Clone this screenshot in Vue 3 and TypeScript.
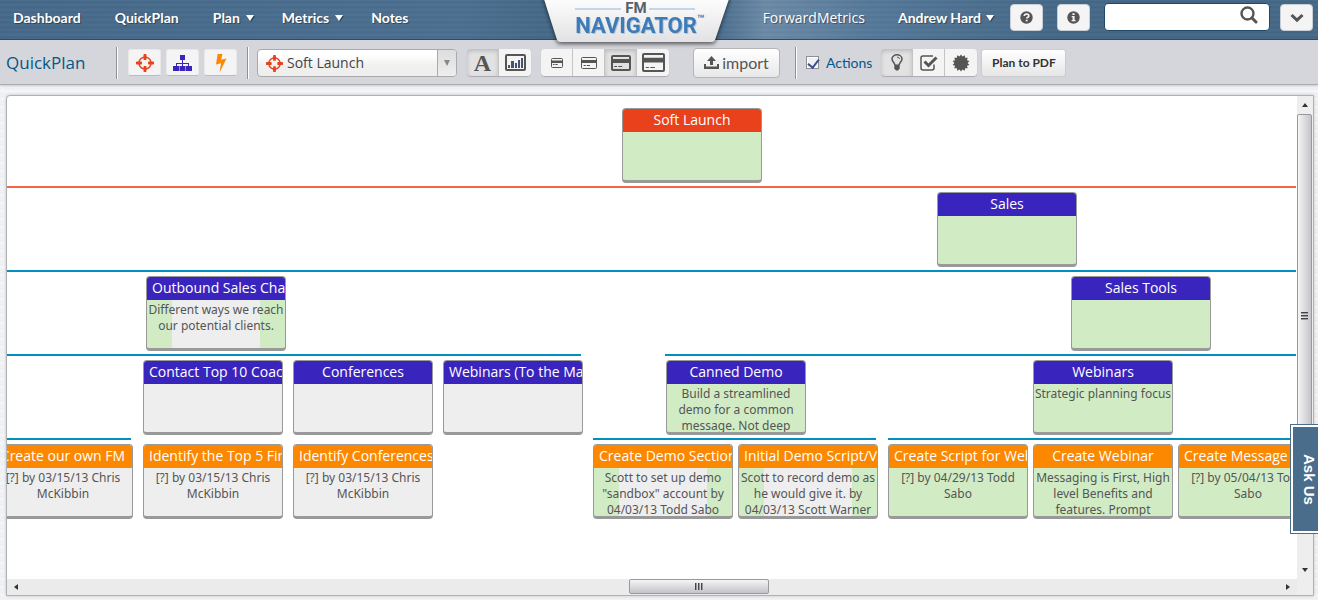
<script setup lang="ts">
import { ref } from 'vue'

type Kind = 'launch' | 'goal' | 'action'
type Fill = 'green' | 'gray' | 'partial'

interface PlanNode {
  x: number
  level: number
  kind: Kind
  fill: Fill
  title: string
  note?: string
}

interface Rail {
  level: number
  from: number
  to?: number
  kind: 'root' | 'branch'
}

const levelHeight = 84

const nodes: PlanNode[] = [
  { x: 615, level: 0, kind: 'launch', fill: 'green', title: 'Soft Launch' },
  { x: 930, level: 1, kind: 'goal', fill: 'green', title: 'Sales' },
  { x: 139, level: 2, kind: 'goal', fill: 'partial', title: 'Outbound Sales Channels', note: 'Different ways we reach our potential clients.' },
  { x: 1064, level: 2, kind: 'goal', fill: 'green', title: 'Sales Tools' },
  { x: 136, level: 3, kind: 'goal', fill: 'gray', title: 'Contact Top 10 Coaches' },
  { x: 286, level: 3, kind: 'goal', fill: 'gray', title: 'Conferences' },
  { x: 436, level: 3, kind: 'goal', fill: 'gray', title: 'Webinars (To the Market)' },
  { x: 659, level: 3, kind: 'goal', fill: 'green', title: 'Canned Demo', note: 'Build a streamlined demo for a common message. Not deep' },
  { x: 1026, level: 3, kind: 'goal', fill: 'green', title: 'Webinars', note: 'Strategic planning focus' },
  { x: -14, level: 4, kind: 'action', fill: 'gray', title: 'Create our own FM', note: '[?] by 03/15/13 Chris McKibbin' },
  { x: 136, level: 4, kind: 'action', fill: 'gray', title: 'Identify the Top 5 Firms', note: '[?] by 03/15/13 Chris McKibbin' },
  { x: 286, level: 4, kind: 'action', fill: 'gray', title: 'Identify Conferences', note: '[?] by 03/15/13 Chris McKibbin' },
  { x: 586, level: 4, kind: 'action', fill: 'partial', title: 'Create Demo Section', note: 'Scott to set up demo "sandbox" account by 04/03/13 Todd Sabo' },
  { x: 731, level: 4, kind: 'action', fill: 'partial', title: 'Initial Demo Script/Video', note: 'Scott to record demo as he would give it. by 04/03/13 Scott Warner' },
  { x: 881, level: 4, kind: 'action', fill: 'green', title: 'Create Script for Webinar', note: '[?] by 04/29/13 Todd Sabo' },
  { x: 1026, level: 4, kind: 'action', fill: 'green', title: 'Create Webinar', note: 'Messaging is First, High level Benefits and features. Prompt' },
  { x: 1171, level: 4, kind: 'action', fill: 'green', title: 'Create Message Script', note: '[?] by 05/04/13 Todd Sabo' },
]

const rails: Rail[] = [
  { level: 1, from: 0, kind: 'root' },
  { level: 2, from: 0, kind: 'branch' },
  { level: 3, from: 0, to: 574, kind: 'branch' },
  { level: 3, from: 658, kind: 'branch' },
  { level: 4, from: 0, to: 124, kind: 'branch' },
  { level: 4, from: 586, to: 869, kind: 'branch' },
  { level: 4, from: 881, kind: 'branch' },
]

const nodeStyle = (n: PlanNode) => ({ left: `${n.x}px`, top: `${12 + n.level * levelHeight}px` })

const railStyle = (r: Rail) => ({
  left: `${r.from}px`,
  top: `${6 + r.level * levelHeight}px`,
  ...(r.to === undefined ? { right: '1px' } : { width: `${r.to - r.from}px` }),
})

const cardSizes = [
  { label: 'Tiny cards', width: 12, height: 10, stroke: 1 },
  { label: 'Small cards', width: 16, height: 12, stroke: 1 },
  { label: 'Medium cards', width: 20, height: 16, stroke: 2 },
  { label: 'Large cards', width: 23, height: 19, stroke: 2 },
]
const cardSize = ref(2)
const showActions = ref(true)
const query = ref('')
const plan = ref('Soft Launch')

const burst = Array.from({ length: 28 }, (_, i) => {
  const r = i % 2 ? 6.6 : 8.6
  const a = (i * Math.PI) / 14
  return `${(9 + r * Math.sin(a)).toFixed(2)},${(9 - r * Math.cos(a)).toFixed(2)}`
}).join(' ')

const crosshair =
  'M1325 1024h-109q-26 0-45-19t-19-45v-128q0-26 19-45t45-19h109q-32-108-112.5-188.5t-188.5-112.5v109q0 26-19 45t-45 19h-128q-26 0-45-19t-19-45v-109q-108 32-188.5 112.5t-112.5 188.5h109q26 0 45 19t19 45v128q0 26-19 45t-45 19h-109q32 108 112.5 188.5t188.5 112.5v-109q0-26 19-45t45-19h128q26 0 45 19t19 45v109q108-32 188.5-112.5t112.5-188.5zM1664 832v128q0 26-19 45t-45 19h-143q-37 161-154.5 278.5t-278.5 154.5v143q0 26-19 45t-45 19h-128q-26 0-45-19t-19-45v-143q-161-37-278.5-154.5t-154.5-278.5h-143q-26 0-45-19t-19-45v-128q0-26 19-45t45-19h143q37-161 154.5-278.5t278.5-154.5v-143q0-26 19-45t45-19h128q26 0 45 19t19 45v143q161 37 278.5 154.5t154.5 278.5h143q26 0 45 19t19 45z'
</script>

<template>
  <div class="app">
    <header class="topbar">
      <nav class="nav">
        <a href="#dashboard">Dashboard</a>
        <a href="#quickplan">QuickPlan</a>
        <a href="#plan" class="has-menu">Plan<i class="caret"></i></a>
        <a href="#metrics" class="has-menu">Metrics<i class="caret"></i></a>
        <a href="#notes">Notes</a>
      </nav>
      <a class="logo" href="#home" aria-label="FM Navigator home">
        <svg width="194" height="50" viewBox="0 0 194 50">
          <defs>
            <linearGradient id="plate" x1="0" y1="0" x2="0" y2="1">
              <stop offset="0" stop-color="#ffffff" />
              <stop offset="1" stop-color="#e2e2e4" />
            </linearGradient>
          </defs>
          <path class="plate" d="M4 -4 L18 40 Q19 42 21 42 H173 Q175 42 176 40 L191 -4 Z" fill="url(#plate)" />
          <path d="M36 9 H82 M110 9 H156" stroke="#8fb4dc" stroke-width="1" />
          <text class="logo-small" x="97" y="13" text-anchor="middle">FM</text>
          <text class="logo-big" x="97" y="33" text-anchor="middle">NAVIGATOR</text>
          <text class="logo-tm" x="158" y="23">™</text>
        </svg>
      </a>
      <div class="account">
        <span class="company">ForwardMetrics</span>
        <a href="#account" class="user has-menu">Andrew Hard<i class="caret"></i></a>
        <button class="square" type="button" aria-label="Help">
          <svg width="13" height="13" viewBox="0 0 13 13">
            <circle cx="6.5" cy="6.5" r="6.2" fill="#555" />
            <path d="M4.3 5 Q4.5 3 6.6 3 Q8.8 3.1 8.8 4.9 Q8.7 6 7.5 6.5 Q6.7 6.9 6.7 7.6" fill="none" stroke="#f4f4f4" stroke-width="1.7" />
            <rect x="5.8" y="8.7" width="1.8" height="1.7" fill="#f4f4f4" />
          </svg>
        </button>
        <button class="square" type="button" aria-label="Information">
          <svg width="13" height="13" viewBox="0 0 13 13">
            <circle cx="6.5" cy="6.5" r="6.2" fill="#555" />
            <path d="M5.4 2.3 h2.2 v1.7 h-2.2z M4.7 5 h2.9 v4 h1 v1.3 h-4 v-1.3 h1 v-2.7 h-.9z" fill="#f4f4f4" />
          </svg>
        </button>
        <label class="search">
          <input v-model="query" type="text" aria-label="Search" />
          <svg width="18" height="18" viewBox="0 0 18 18" fill="none" stroke="#555">
            <circle cx="7.5" cy="7.5" r="6" stroke-width="2.4" />
            <path d="M12 12 L16 16" stroke-width="3" stroke-linecap="round" />
          </svg>
        </label>
        <button class="square last" type="button" aria-label="More">
          <svg width="14" height="10" viewBox="0 0 14 10" fill="none" stroke="#555" stroke-width="3">
            <path d="M1.5 2 L7 7.2 L12.5 2" />
          </svg>
        </button>
      </div>
    </header>

    <div class="toolbar">
      <h1>QuickPlan</h1>
      <span class="divider"></span>
      <div class="tools">
        <button class="tool" type="button" aria-label="Add target">
          <svg width="18" height="18" viewBox="128 128 1536 1536" fill="#e8421c"><path :d="crosshair" /></svg>
        </button>
        <button class="tool" type="button" aria-label="Add goal">
          <svg width="19" height="16" viewBox="0 0 19 16" fill="#3a24be">
            <path d="M7 0h5v5h-5z M0 11h6v5h-6z M6.5 11h6v5h-6z M13 11h6v5h-6z M9 5h1v3h6v3h-1v-2h-5v2h-1v-2h-5v2h-1v-3h6z" />
          </svg>
        </button>
        <button class="tool" type="button" aria-label="Add action">
          <svg width="12" height="20" viewBox="0 0 12 20" fill="#fb8800">
            <path d="M2.6 1 H7.5 L6 6.8 L11.5 5.5 L4.6 19.5 L6 10.3 L1 11.5 Z" />
          </svg>
        </button>
      </div>
      <span class="divider near"></span>
      <label class="picker">
        <svg class="picker-icon" width="17" height="17" viewBox="128 128 1536 1536" fill="#e8421c"><path :d="crosshair" /></svg>
        <select v-model="plan" aria-label="Plan">
          <option>Soft Launch</option>
        </select>
        <span class="picker-arrow"><i></i></span>
      </label>
      <div class="group views">
        <button class="active letter" type="button" aria-label="Text view">A</button>
        <button type="button" aria-label="Chart view">
          <svg width="21" height="17" viewBox="0 0 21 17">
            <rect x="1" y="1" width="19" height="15" rx="1" fill="none" stroke="#555" stroke-width="2" />
            <path d="M3 11h2v3h-2z M6 7h3v7h-3z M10 9h2v5h-2z M13 6h2v8h-2z M16 4h2v10h-2z" fill="#46536f" />
          </svg>
        </button>
      </div>
      <div class="group sizes">
        <button
          v-for="(size, i) in cardSizes"
          :key="size.label"
          type="button"
          :class="{ active: cardSize === i }"
          :aria-label="size.label"
          @click="cardSize = i"
        >
          <svg :width="size.width" :height="size.height" fill="#555">
            <rect
              :x="size.stroke / 2"
              :y="size.stroke / 2"
              :width="size.width - size.stroke"
              :height="size.height - size.stroke"
              rx="1"
              fill="none"
              stroke="#555"
              :stroke-width="size.stroke"
            />
            <rect x="0" y="25%" width="100%" height="25%" />
            <rect x="16%" :y="size.height - size.stroke - 3" width="14%" height="1" />
            <rect x="36%" :y="size.height - size.stroke - 3" width="20%" height="1" />
          </svg>
        </button>
      </div>
      <button class="import" type="button">
        <svg width="15" height="13" viewBox="0 0 15 13" fill="#555">
          <path d="M7.5 0 L12 5 H9 V9 H6 V5 H3 Z M0 8 H2 V10.5 H13 V8 H15 V13 H0 Z" />
        </svg>
        import
      </button>
      <span class="divider"></span>
      <label class="actions">
        <input v-model="showActions" type="checkbox" />
        Actions
      </label>
      <div class="group">
        <button class="active" type="button" aria-label="Ideas">
          <svg width="12" height="17" viewBox="0 0 12 17" fill="none" stroke="#555">
            <path d="M3.8 11 C3.8 8.5 1 8 1 5 C1 2.5 3.3 .8 6 .8 C8.7 .8 11 2.5 11 5 C11 8 8.2 8.5 8.2 11" stroke-width="1.5" />
            <path d="M6 3 Q8.5 3.2 8.5 5" stroke-width=".9" />
            <path d="M3.3 10.5h5.4v4l-1.7 2h-2l-1.7-2z" fill="#555" stroke="none" />
          </svg>
        </button>
        <button type="button" aria-label="Tasks">
          <svg width="18" height="16" viewBox="0 0 18 16" fill="none" stroke="#555">
            <path d="M14 9.5 V13 Q14 15 12 15 H3 Q1 15 1 13 V3 Q1 1 3 1 H13" stroke-width="1.5" />
            <path d="M4.5 6.5 L8.5 10.5 L16.5 2.5" stroke-width="3" />
          </svg>
        </button>
        <button type="button" aria-label="Badges">
          <svg width="18" height="18" viewBox="0 0 18 18"><polygon :points="burst" fill="#555" /></svg>
        </button>
      </div>
      <button class="pdf" type="button">Plan to PDF</button>
    </div>

    <main class="board">
      <div class="canvas">
        <span v-for="(r, i) in rails" :key="i" class="rail" :class="r.kind" :style="railStyle(r)"></span>
        <article v-for="n in nodes" :key="`${n.level}-${n.x}`" class="node" :class="[n.kind, n.fill]" :style="nodeStyle(n)">
          <h2>{{ n.title }}</h2>
          <p>{{ n.note }}</p>
        </article>
      </div>
      <div class="vbar">
        <i class="arrow up"></i>
        <div class="vthumb"><i></i><i></i><i></i></div>
        <div class="vrest"></div>
        <i class="arrow down"></i>
      </div>
      <div class="hbar">
        <i class="arrow left"></i>
        <div class="hbefore"></div>
        <div class="hthumb"><i></i><i></i><i></i></div>
        <div class="hafter"></div>
        <i class="arrow right"></i>
      </div>
      <div class="corner"></div>
    </main>

    <button class="ask" type="button"><span>Ask Us</span></button>
  </div>
</template>

<style>
body {
  margin: 0;
  background: #eef0f2;
}
</style>

<style scoped>
* {
  box-sizing: border-box;
}
.app {
  display: flex;
  flex-direction: column;
  min-height: 100vh;
  overflow: hidden;
  font-family: 'Open Sans', 'Noto Sans', sans-serif;
  color: #444;
  background: repeating-linear-gradient(180deg, #eceef1 0, #f5f6f8 3px, #edeff2 6px, #f1f3f5 8px);
}
button {
  margin: 0;
  padding: 0;
  font: inherit;
  color: inherit;
  cursor: pointer;
}
a {
  color: #fff;
  text-decoration: none;
}
.topbar {
  position: relative;
  z-index: 2;
  display: flex;
  height: 40px;
  border-bottom: 1px solid #2c4c6a;
  background:
    repeating-linear-gradient(180deg, rgba(255, 255, 255, 0.04) 0, rgba(0, 0, 0, 0.03) 2px, rgba(255, 255, 255, 0.03) 5px),
    linear-gradient(90deg, #46698a 0, #4b6f90 35%, #456989 41%, #456989 54%, #6b8aa7 58%, #55799a 66%, #456888 80%);
  font-family: Lato, sans-serif;
  font-size: 14px;
  font-weight: 700;
  color: #fff;
  text-shadow: 1px 1px 1px rgba(0, 0, 0, 0.4);
}
.nav {
  display: flex;
  flex: 10 1 0;
  gap: 34px;
  padding: 9px 0 0 13px;
  line-height: 17px;
}
.nav .has-menu {
  margin-right: -6px;
}
.has-menu {
  white-space: nowrap;
}
.caret {
  display: inline-block;
  margin-left: 6px;
  vertical-align: 2px;
  border: 4px solid transparent;
  border-top: 6px solid #fff;
  border-bottom: 0;
  filter: drop-shadow(1px 1px 0 rgba(0, 0, 0, 0.4));
}
.logo {
  flex: none;
  width: 186px;
  height: 39px;
  text-shadow: none;
}
.logo svg {
  display: block;
  margin: 0 -4px;
}
.plate {
  filter: drop-shadow(0 2px 2px rgba(0, 0, 0, 0.6));
}
.logo text {
  font-family: 'Liberation Sans Narrow', Roboto, sans-serif;
  font-weight: 700;
}
.logo-small {
  font-size: 15px;
  fill: #56616c;
}
.logo-big {
  font-size: 22px;
  fill: #3d7cba;
  filter: drop-shadow(1px 1px 0 #b9c4cf);
}
.logo-tm {
  font-size: 12px;
  fill: #3d7cba;
}
.account {
  display: flex;
  flex: 11 1 0;
  justify-content: flex-end;
  padding: 4px 5px 0 0;
}
.company {
  margin: 4px 33px 0 0;
  font-family: 'Open Sans', sans-serif;
  font-size: 14px;
  font-weight: 400;
  line-height: 19px;
}
.user {
  margin: 5px 16px 0 0;
  line-height: 17px;
}
.user .caret {
  margin-left: 5px;
}
.square {
  display: flex;
  align-items: center;
  justify-content: center;
  width: 33px;
  height: 27px;
  margin-right: 14px;
  border: 1px solid #c9ced4;
  border-radius: 4px;
  background: #f4f4f4;
}
.square.last {
  margin-right: 0;
}
.search {
  display: flex;
  align-items: center;
  width: 166px;
  height: 28px;
  margin: -1px 10px 0 0;
  padding: 0 11px 4px 6px;
  border: 1px solid #1f4766;
  border-radius: 4px;
  background: #fff;
}
.search input {
  flex: 1;
  min-width: 0;
  border: 0;
  outline: 0;
  background: none;
  font: 14px Lato, sans-serif;
}
.toolbar {
  display: flex;
  align-items: center;
  height: 45px;
  padding: 1px 6px 0;
  border-bottom: 1px solid #aaabad;
  background: #d5d6dc;
  box-shadow: 0 1px 2px rgba(0, 0, 0, 0.15);
}
h1 {
  width: 110px;
  margin: 0;
  font-size: 17px;
  font-weight: 400;
  line-height: 24px;
  color: #045888;
}
.divider {
  width: 2px;
  height: 32px;
  margin-right: 10px;
  border-left: 1px solid #909090;
  border-right: 1px solid #fff;
}
.divider.near {
  margin-right: 8px;
}
.tools {
  display: flex;
  gap: 5px;
  margin-right: 10px;
}
.tool {
  display: flex;
  align-items: center;
  justify-content: center;
  width: 33px;
  height: 27px;
  border: 1px solid #e8e8e8;
  border-bottom-color: #bbb;
  border-radius: 3px;
  background: #f4f4f4;
}
.picker {
  position: relative;
  display: flex;
  width: 200px;
  height: 28px;
  margin-right: 10px;
  border: 1px solid #aaa;
  border-radius: 4px;
  background: linear-gradient(#fff 20%, #f0f0f0 60%, #eee);
}
.picker select {
  flex: 1;
  min-width: 0;
  padding: 0 0 0 29px;
  border: 0;
  appearance: none;
  background: none;
  font: 14px 'Open Sans', sans-serif;
  color: #444;
}
.picker-icon {
  position: absolute;
  left: 8px;
  top: 5px;
}
.picker-arrow {
  display: flex;
  align-items: center;
  justify-content: center;
  width: 19px;
  border-left: 1px solid #aaa;
  border-radius: 0 3px 3px 0;
  background: linear-gradient(#ddd, #eee);
  pointer-events: none;
}
.picker-arrow i {
  border: 3px solid transparent;
  border-top: 6px solid #888;
  border-bottom: 0;
}
.group {
  display: flex;
  height: 27px;
  border-radius: 4px;
  box-shadow: 0 1px 1px rgba(0, 0, 0, 0.2);
}
.group button {
  display: flex;
  align-items: center;
  justify-content: center;
  width: 32px;
  border: 0;
  border-right: 1px solid #c4c4c4;
  background: #f4f4f4;
}
.group button:first-child {
  border-radius: 4px 0 0 4px;
}
.group button:last-child {
  border-right: 0;
  border-radius: 0 4px 4px 0;
}
.group button.active {
  background: #e2e2e2;
  box-shadow: inset 0 2px 4px rgba(0, 0, 0, 0.18);
}
.group .letter {
  font: 700 24px/28px 'Liberation Serif', serif;
  color: #555;
}
.views {
  margin-right: 10px;
}
.sizes {
  margin-right: 24px;
}
.import {
  display: flex;
  align-items: center;
  justify-content: center;
  gap: 3px;
  width: 87px;
  height: 30px;
  margin-right: 15px;
  border: 1px solid #b5b5b5;
  border-radius: 4px;
  background: linear-gradient(#fff, #e8e8e8);
  font: 16px/20px Lato, sans-serif;
  color: #555;
}
.actions {
  display: flex;
  align-items: center;
  gap: 7px;
  margin: 0 9px 0 -1px;
  font: 14px/20px Lato, sans-serif;
  color: #045888;
}
.actions input {
  width: 13px;
  height: 13px;
  margin: 0;
  appearance: none;
  border: 1px solid #8e8f8f;
  outline: 0;
  background: #f0f1f5;
  box-shadow: inset 0 0 0 1px #fff;
}
.actions input:checked::before {
  content: '';
  display: block;
  width: 5px;
  height: 9px;
  margin: 0 0 0 3px;
  border: solid #3f4f8f;
  border-width: 0 2px 2px 0;
  transform: rotate(38deg);
}
.pdf {
  width: 85px;
  height: 28px;
  margin-left: 4px;
  border: 1px solid #ccc;
  border-radius: 3px;
  background: linear-gradient(#fff, #e6e6e6);
  font: 700 12px/16px Lato, sans-serif;
  color: #333;
}
.board {
  display: grid;
  flex: 1;
  grid-template: minmax(483px, 1fr) 16px / minmax(0, 1fr) 16px;
  margin: 10px 4px 4px 6px;
  border: 1px solid #b0b1b3;
  border-radius: 4px 0 0 0;
  background: #fff;
  box-shadow: 0 0 3px rgba(0, 0, 0, 0.2);
}
.canvas {
  position: relative;
  overflow: hidden;
}
.rail {
  position: absolute;
  height: 2px;
  background: #008fbe;
}
.rail.root {
  background: #f5653f;
}
.node {
  position: absolute;
  width: 140px;
  height: 75px;
  overflow: hidden;
  border: 1px solid #999;
  border-bottom-width: 3px;
  border-radius: 4px;
  background: #eee;
}
.node h2 {
  height: 23px;
  margin: 0;
  padding: 0 5px;
  font-size: 14px;
  font-weight: 400;
  line-height: 21px;
  text-align: center;
  white-space: nowrap;
  color: #fff;
  background: #3a24be;
}
.launch h2 {
  background: #e8411b;
}
.action h2 {
  background: #fb8800;
}
.node p {
  height: 48px;
  margin: 0;
  padding-top: 2px;
  font-family: 'Noto Sans', sans-serif;
  font-size: 12px;
  line-height: 16px;
  text-align: center;
  color: #555;
}
.green {
  background: #d1ecc5;
}
.partial {
  background: linear-gradient(90deg, #d1ecc5 25px, #eee 25px, #eee 113px, #d1ecc5 113px);
}
.vbar {
  display: flex;
  flex-direction: column;
  align-items: center;
  padding: 7px 1px 7px 0;
  background: #eee;
}
.vthumb {
  display: flex;
  flex: 400 1 0;
  flex-direction: column;
  align-items: center;
  justify-content: center;
  gap: 1px;
  width: 15px;
  margin-top: 7px;
  border: 1px solid #999;
  border-radius: 2px;
  background: linear-gradient(90deg, #f5f5f5, #dcdcdf 50%, #c4c4ca);
}
.vthumb i {
  width: 7px;
  height: 2px;
  border-top: 1px solid #444;
  border-bottom: 1px solid #999;
}
.vrest {
  flex: 50 1 0;
}
.hbar {
  display: flex;
  align-items: center;
  padding: 0 7px 1px;
  background: #ebebeb;
}
.hbefore {
  flex: 612 1 0;
}
.hthumb {
  display: flex;
  flex: 138 1 0;
  align-items: center;
  justify-content: center;
  gap: 1px;
  height: 15px;
  border: 1px solid #999;
  border-radius: 2px;
  background: linear-gradient(#f5f5f5, #dcdcdf 50%, #c4c4ca);
}
.hthumb i {
  width: 2px;
  height: 7px;
  border-left: 1px solid #444;
  border-right: 1px solid #999;
}
.hafter {
  flex: 518 1 0;
}
.corner {
  background: #eee;
}
.arrow {
  width: 0;
  height: 0;
  border: 3px solid transparent;
}
.up {
  border-top: 0;
  border-bottom: 4px solid #333;
}
.down {
  border-bottom: 0;
  border-top: 4px solid #333;
}
.left {
  border-left: 0;
  border-right: 4px solid #333;
}
.right {
  border-right: 0;
  border-left: 4px solid #333;
}
.ask {
  position: fixed;
  z-index: 3;
  top: 424px;
  right: 0;
  width: 28px;
  height: 110px;
  padding: 2px 0 2px 2px;
  border: 1px solid #4a6d8c;
  border-right: 0;
  background: #fff;
}
.ask span {
  display: flex;
  align-items: center;
  justify-content: center;
  width: 100%;
  height: 100%;
  padding-left: 7px;
  background: #4a6d8c;
  font: 700 15px/16px 'Liberation Sans', sans-serif;
  color: #fff;
  writing-mode: vertical-rl;
}
</style>
